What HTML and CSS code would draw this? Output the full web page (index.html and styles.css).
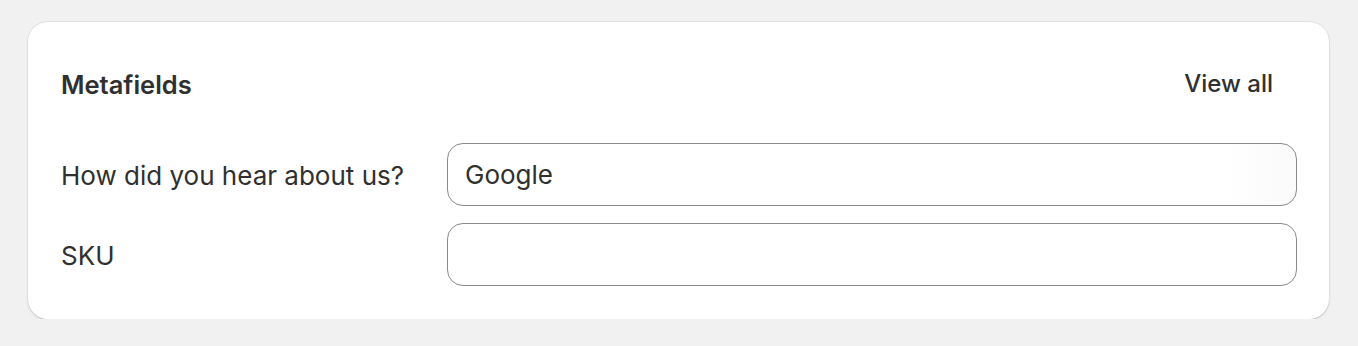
FILE: index.html
```html
<!DOCTYPE html>
<html lang="en">
<head>
<meta charset="utf-8">
<title>Metafields</title>
<link rel="stylesheet" href="styles.css">
</head>
<body>
<main class="page">
  <section class="card">
    <header class="card-header">
      <h2 class="card-title">Metafields</h2>
      <button class="link-button" type="button">View all</button>
    </header>
    <div class="fields">
      <label class="field-label" for="hear">How did you hear about us?</label>
      <input class="field-input field-input--filled" id="hear" type="text" value="Google">
      <label class="field-label" for="sku">SKU</label>
      <input class="field-input" id="sku" type="text" value="">
    </div>
  </section>
</main>
</body>
</html>
```
FILE: styles.css
```css
* { box-sizing: border-box; }
html, body {
  margin: 0;
  background: #f1f1f1;
  font-family: Inter, "Noto Sans", sans-serif;
  color: #303030;
}
.page {
  padding: 22px 29px 0 28px;
}
.card {
  background: #fff;
  border-radius: 20px;
  padding: 32px 32px 33px 33px;
  box-shadow: 0 0 0 1px rgba(0,0,0,0.06), 0 1px 0 rgba(0,0,0,0.1), 0 2px 4px rgba(0,0,0,0.05);
}
.card-header {
  display: flex;
  align-items: center;
  justify-content: space-between;
  height: 60px;
}
.card-title {
  margin: 0;
  font-size: 25.5px;
  font-weight: 600;
  line-height: 34px;
  padding-top: 1px;
}
.link-button {
  font: inherit;
  font-size: 24px;
  font-weight: 500;
  color: #303030;
  background: transparent;
  border: 0;
  padding: 12px 24px;
  line-height: 30px;
  border-radius: 12px;
  cursor: pointer;
}
.fields {
  margin-top: 29px;
  display: grid;
  grid-template-columns: 386px 1fr;
  row-gap: 17px;
  align-items: center;
}
.field-label {
  font-size: 26px;
  line-height: 34px;
  padding-top: 3px;
}
.field-input {
  height: 63px;
  border: 1px solid #8a8a8a;
  border-radius: 16px;
  padding: 0 17px;
  font: inherit;
  font-size: 26px;
  color: #303030;
  background: #fff;
  outline: none;
}
.field-input--filled {
  background: linear-gradient(to right, #fff 0, #fff 92%, #fafafa 100%);
}
```
